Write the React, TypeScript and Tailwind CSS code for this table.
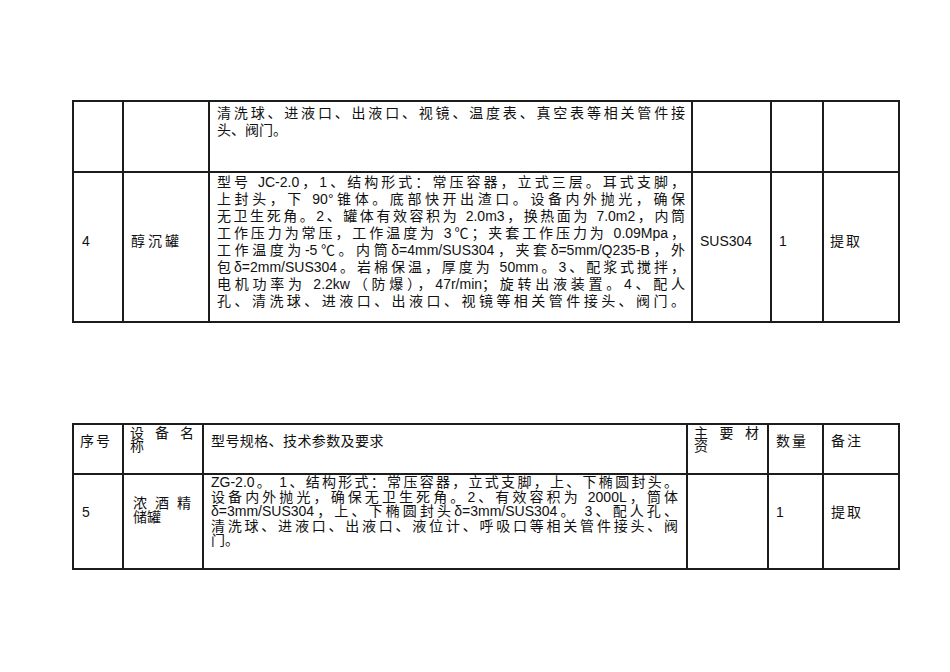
import React from "react";

const F = { fontFamily: '"Liberation Sans", "Noto Sans CJK SC", "Noto Sans", sans-serif' };
const A = { fontFamily: '"Liberation Sans", Arial, sans-serif' };

function J({ children, last = false }: { children: React.ReactNode; last?: boolean }) {
  return (
    <div className={last ? "text-left whitespace-nowrap" : "text-justify [text-align-last:justify] whitespace-nowrap"}>
      {children}
    </div>
  );
}

const B = "border-r-2 border-b-2 border-[#1c1c1c]";

export default function App() {
  return (
    <div className="w-[950px] h-[672px] bg-white text-[#111] text-[14px] font-normal pt-[100px] pl-[72px]" style={F}>
      {/* Table 1 */}
      <div className="w-[828px] border-l-2 border-t-2 border-[#1c1c1c]">
        <div className="grid grid-cols-[50px_86px_483px_79px_52px_76px] h-[71px]">
          <div className={B} />
          <div className={B} />
          <div className={`${B} pl-[7px] pr-[6px] pt-[3px] leading-[16.5px]`}>
            <J>清洗球、进液口、出液口、视镜、温度表、真空表等相关管件接</J>
            <J last>头、阀门。</J>
          </div>
          <div className={B} />
          <div className={B} />
          <div className={B} />
        </div>
        <div className="grid grid-cols-[50px_86px_483px_79px_52px_76px] h-[150px]">
          <div className={`${B} flex items-center pl-[8px] pb-[12px]`} style={A}>4</div>
          <div className={`${B} flex items-center pl-[7px] pb-[12px] tracking-[3px]`}>醇沉罐</div>
          <div className={`${B} pl-[7px] pr-[6px] pt-[1px] leading-[17px]`}>
            <J>型号 JC-2.0，1、结构形式：常压容器，立式三层。耳式支脚，</J>
            <J>上封头，下 90°锥体。底部快开出渣口。设备内外抛光，确保</J>
            <J>无卫生死角。2、罐体有效容积为 2.0m3，换热面为 7.0m2，内筒</J>
            <J>工作压力为常压，工作温度为 3℃；夹套工作压力为 0.09Mpa，</J>
            <J>工作温度为-5℃。内筒δ=4mm/SUS304，夹套δ=5mm/Q235-B，外</J>
            <J>包δ=2mm/SUS304。岩棉保温，厚度为 50mm。3、配浆式搅拌，</J>
            <J>电机功率为 2.2kw（防爆），47r/min；旋转出液装置。4、配人</J>
            <J>孔、清洗球、进液口、出液口、视镜等相关管件接头、阀门。</J>
          </div>
          <div className={`${B} flex items-center pl-[7px] pb-[12px]`} style={A}>SUS304</div>
          <div className={`${B} flex items-center pl-[7px] pb-[12px]`} style={A}>1</div>
          <div className={`${B} flex items-center pl-[6px] pb-[12px] tracking-[2px]`}>提取</div>
        </div>
      </div>

      {/* Table 2 */}
      <div className="mt-[100px] w-[828px] border-l-2 border-t-2 border-[#1c1c1c]">
        <div className="grid grid-cols-[50px_80px_484px_81px_55px_76px] h-[50px]">
          <div className={`${B} pl-[6px] pt-[6px] tracking-[2px]`}>序号</div>
          <div className={`${B} pl-[6px] pr-[8px] pt-[2px] leading-[13px]`}>
            <J>设 备 名</J>
            <J last>称</J>
          </div>
          <div className={`${B} pl-[7px] pt-[6px] tracking-[0.4px]`}>型号规格、技术参数及要求</div>
          <div className={`${B} pl-[6px] pr-[8px] pt-[2px] leading-[13px]`}>
            <J>主 要 材</J>
            <J last>资</J>
          </div>
          <div className={`${B} pl-[7px] pt-[6px] tracking-[2px]`}>数量</div>
          <div className={`${B} pl-[7px] pt-[6px] tracking-[2px]`}>备注</div>
        </div>
        <div className="grid grid-cols-[50px_80px_484px_81px_55px_76px] h-[95px]">
          <div className={`${B} flex items-center pl-[8px] pb-[18px]`} style={A}>5</div>
          <div className={`${B} flex flex-col justify-center pl-[9px] pr-[11px] pb-[24px] leading-[14px]`}>
            <J>浓 酒 精</J>
            <J last>储罐</J>
          </div>
          <div className={`${B} pl-[7px] pr-[8px] pt-0 leading-[14.5px]`}>
            <J>ZG-2.0。 1、结构形式：常压容器，立式支脚，上、下椭圆封头。</J>
            <J>设备内外抛光，确保无卫生死角。2、有效容积为 2000L，筒体</J>
            <J>δ=3mm/SUS304，上、下椭圆封头δ=3mm/SUS304。 3、配人孔、</J>
            <J>清洗球、进液口、出液口、液位计、呼吸口等相关管件接头、阀</J>
            <J last>门。</J>
          </div>
          <div className={B} />
          <div className={`${B} flex items-center pl-[7px] pb-[18px]`} style={A}>1</div>
          <div className={`${B} flex items-center pl-[7px] pb-[18px] tracking-[2px]`}>提取</div>
        </div>
      </div>
    </div>
  );
}
